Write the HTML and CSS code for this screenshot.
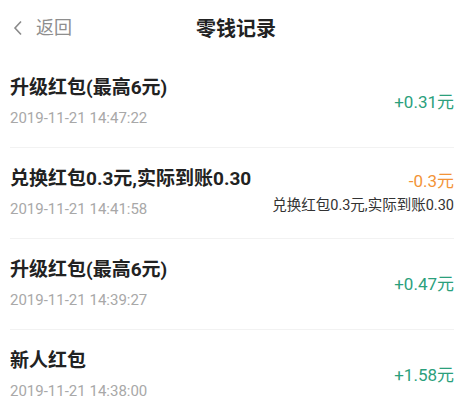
FILE: index.html
```html
<!DOCTYPE html>
<html lang="zh-CN">
<head>
    <meta charset="UTF-8">
    <meta name="viewport" content="width=device-width, initial-scale=1.0">
    <title>零钱记录</title>
    <link rel="stylesheet" href="styles.css">
</head>
<body>
    <div class="header">
        <div class="back">
            <svg class="back-icon" width="10" height="16" viewBox="0 0 10 16">
                <polyline points="8,1.5 2,8 8,14.5" fill="none" stroke="#8a8a8a" stroke-width="1.6"/>
            </svg>
            <span>返回</span>
        </div>
        <h1>零钱记录</h1>
    </div>

    <div class="list">
        <div class="record">
            <div class="info">
                <div class="title">升级红包(最高6元)</div>
                <div class="date">2019-11-21 14:47:22</div>
            </div>
            <div class="amount-box">
                <div class="amount plus">+0.31元</div>
            </div>
        </div>
        <div class="record">
            <div class="info">
                <div class="title">兑换红包0.3元,实际到账0.30</div>
                <div class="date">2019-11-21 14:41:58</div>
            </div>
            <div class="amount-box">
                <div class="amount minus">-0.3元</div>
                <div class="note">兑换红包0.3元,实际到账0.30</div>
            </div>
        </div>
        <div class="record">
            <div class="info">
                <div class="title">升级红包(最高6元)</div>
                <div class="date">2019-11-21 14:39:27</div>
            </div>
            <div class="amount-box">
                <div class="amount plus">+0.47元</div>
            </div>
        </div>
        <div class="record">
            <div class="info">
                <div class="title">新人红包</div>
                <div class="date">2019-11-21 14:38:00</div>
            </div>
            <div class="amount-box">
                <div class="amount plus">+1.58元</div>
            </div>
        </div>
    </div>
</body>
</html>
```

FILE: styles.css
```css
body {
    margin: 0;
    background-color: #fff;
    font-family: Roboto, "Noto Sans CJK SC", sans-serif;
    color: #222;
}
.header {
    position: relative;
    height: 57px;
    display: flex;
    align-items: center;
    justify-content: center;
}
.header h1 {
    margin: 0;
    font-size: 20px;
    font-weight: bold;
    color: #222;
    line-height: 28px;
}
.back {
    position: absolute;
    left: 13px;
    top: 14px;
    display: flex;
    align-items: center;
    gap: 13px;
    font-size: 18px;
    color: #8e8e8e;
    line-height: 28px;
}
.list {
    margin: 0 18px 0 10px;
}
.record {
    display: flex;
    justify-content: space-between;
    align-items: center;
    padding: 17px 0 18px;
    border-bottom: 1px solid #f2f2f2;
}
.record:last-child {
    border-bottom: none;
}
.title {
    font-size: 19px;
    font-weight: bold;
    line-height: 28px;
    color: #222;
}
.date {
    margin-top: 5px;
    font-size: 15px;
    line-height: 22px;
    color: #a8a8a8;
}
.amount-box {
    display: flex;
    flex-direction: column;
    align-items: flex-end;
    gap: 4px;
}
.amount {
    font-size: 17px;
    line-height: 22px;
}
.plus {
    color: #2ba07c;
}
.minus {
    color: #f39437;
}
.note {
    font-size: 14.5px;
    line-height: 20px;
    color: #333;
}
```
